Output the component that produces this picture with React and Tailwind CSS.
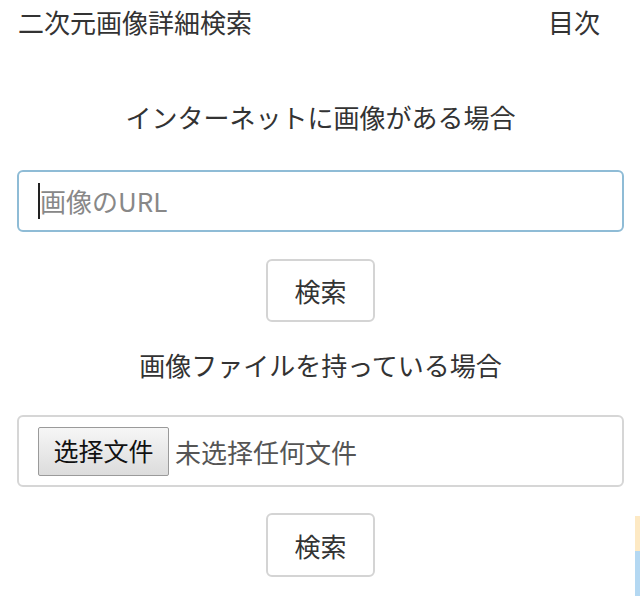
export default function App() {
  return (
    <div className="relative min-h-[596px] bg-white text-[#333] font-['Noto_Sans_CJK_JP',sans-serif]">
      <header className="flex items-center justify-between pl-[18px] pr-[40px] pt-[2px] h-[42px]">
        <span className="text-[26px] leading-none">二次元画像詳細検索</span>
        <span className="text-[26px] leading-none">目次</span>
      </header>

      <section className="px-[17px] pr-[16px]">
        <h2 className="mt-[62px] text-center text-[26px] leading-none">インターネットに画像がある場合</h2>
        <div className="mt-[40px] flex h-[62px] items-center rounded-[6px] border-2 border-[#8fbcd6] pl-[19px]">
          <span className="h-[36px] w-[2px] bg-[#222]"></span>
          <span className="text-[26px] leading-none text-[#888]">画像のURL</span>
        </div>
        <div className="mt-[27px] flex justify-center">
          <button className="h-[63px] w-[109px] rounded-[6px] border-2 border-[#d4d4d4] bg-white text-[26px] text-[#333]">検索</button>
        </div>

        <h2 className="mt-[30px] text-center text-[26px] leading-none">画像ファイルを持っている場合</h2>
        <div className="mt-[37px] flex h-[72px] items-center rounded-[6px] border-2 border-[#d6d6d6] pl-[19px] font-['Noto_Sans_CJK_SC',sans-serif]">
          <span className="flex h-[49px] w-[131px] items-center justify-center rounded-[2px] border border-[#9a9a9a] bg-gradient-to-b from-[#f6f6f6] to-[#dcdcdc] text-[25px] text-[#111]">选择文件</span>
          <span className="ml-[6px] text-[26px] text-[#555]">未选择任何文件</span>
        </div>
        <div className="mt-[26px] flex justify-center">
          <button className="h-[64px] w-[109px] rounded-[6px] border-2 border-[#d4d4d4] bg-white text-[26px] text-[#333]">検索</button>
        </div>
      </section>

      <div className="absolute right-0 top-[516px] flex w-[5px] flex-col">
        <div className="h-[35px] bg-[#fde9c4]"></div>
        <div className="h-[45px] bg-[#b4d8f2]"></div>
      </div>
    </div>
  )
}
